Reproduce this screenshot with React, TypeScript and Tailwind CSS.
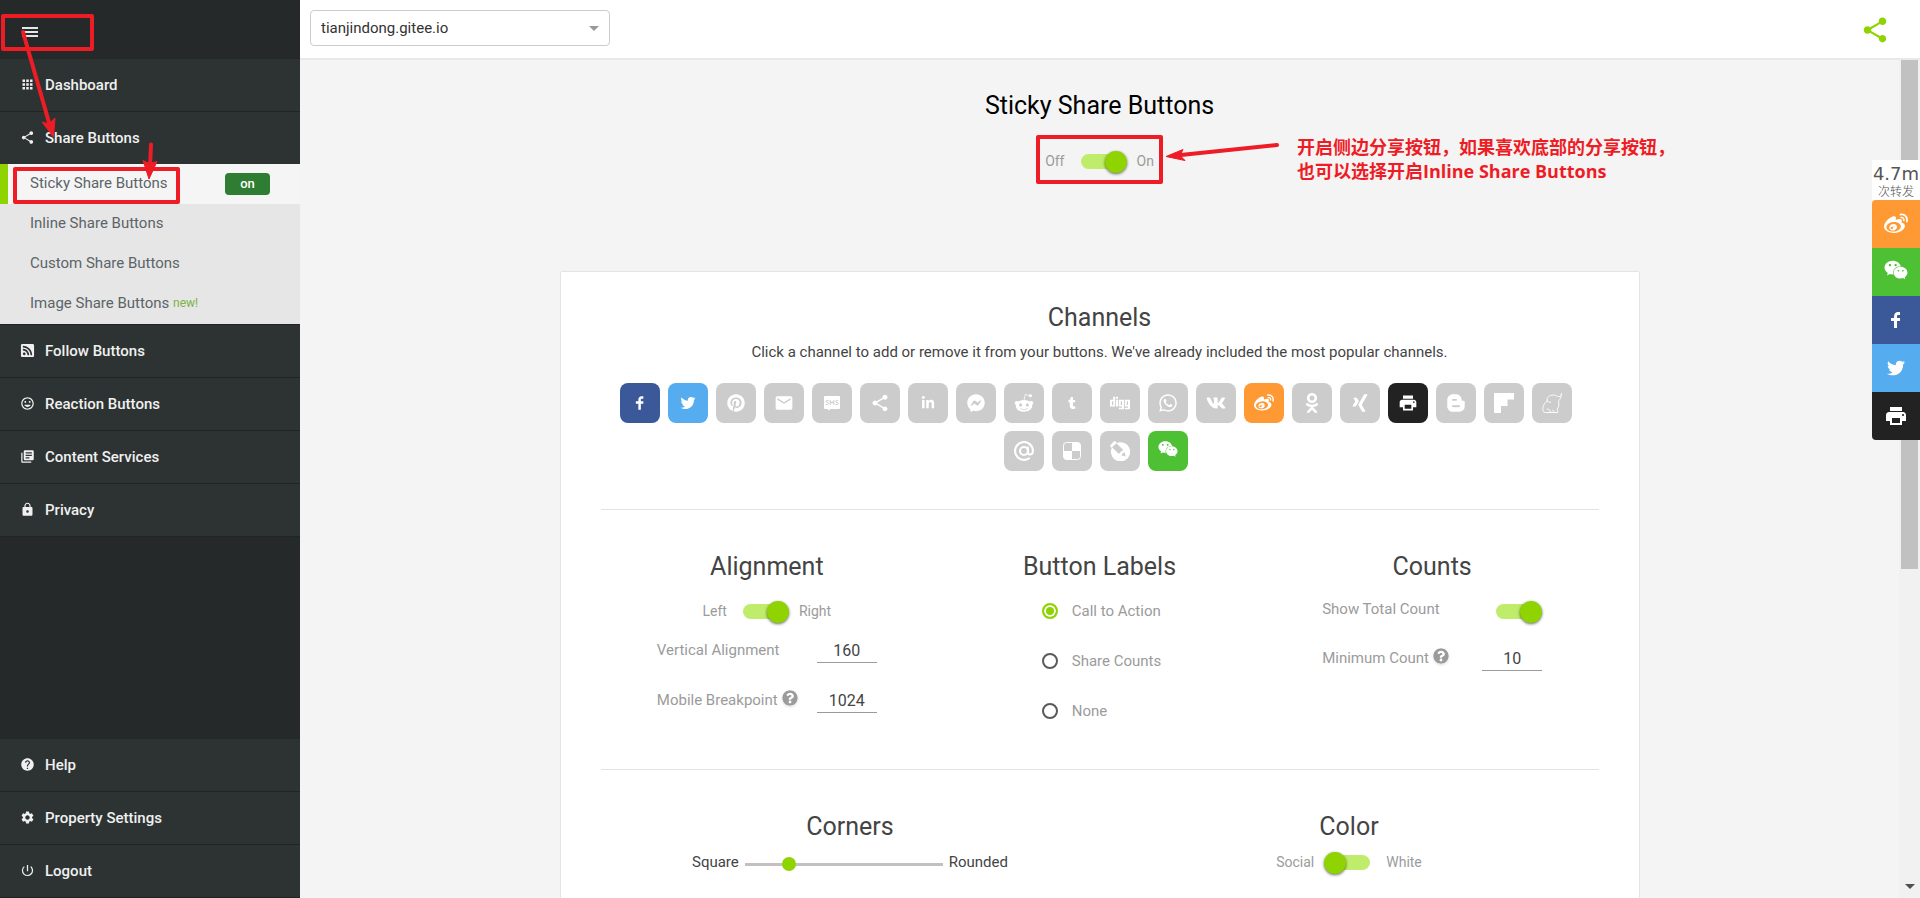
import React, { useId } from "react";
import type { ComponentType, ReactNode } from "react";
import {
  MdApps,
  MdArrowDropDown,
  MdEmail,
  MdHelp,
  MdInsertEmoticon,
  MdLibraryBooks,
  MdLock,
  MdPowerSettingsNew,
  MdPrint,
  MdSettings,
  MdShare,
} from "react-icons/md";
import {
  FaBloggerB,
  FaDigg,
  FaFacebookMessenger,
  FaLinkedinIn,
  FaOdnoklassniki,
  FaPinterest,
  FaQuestionCircle,
  FaRedditAlien,
  FaRssSquare,
  FaTumblr,
  FaVk,
  FaWeibo,
  FaWeixin,
  FaWhatsapp,
  FaXing,
} from "react-icons/fa";

type IconType = ComponentType<{ className?: string }>;

/* ---------- custom icons ---------- */

const Facebook: IconType = ({ className }) => (
  <svg viewBox="0 0 40 40" fill="currentColor" className={className}>
    <path d="m21.7 16.7h5v5h-5v11.6h-5v-11.6h-5v-5h5v-2.1c0-2 0.6-4.5 1.8-5.9 1.3-1.3 2.8-2 4.7-2h3.5v5h-3.5c-0.9 0-1.5 0.6-1.5 1.5v3.5z" />
  </svg>
);

const Twitter: IconType = ({ className }) => (
  <svg viewBox="0 0 40 40" fill="currentColor" className={className}>
    <path d="m31.5 11.7c1.3-0.8 2.2-2 2.7-3.4-1.4 0.7-2.7 1.2-4 1.4-1.1-1.2-2.6-1.9-4.4-1.9-1.7 0-3.2 0.6-4.4 1.8-1.2 1.2-1.8 2.7-1.8 4.4 0 0.5 0.1 0.9 0.2 1.3-5.1-0.1-9.4-2.3-12.7-6.4-0.6 1-0.9 2.1-0.9 3.1 0 2.2 1 3.9 2.8 5.2-1.1-0.1-2-0.4-2.8-0.8 0 1.5 0.5 2.8 1.4 4 0.9 1.1 2.1 1.8 3.5 2.1-0.5 0.1-1 0.2-1.6 0.2-0.5 0-0.9 0-1.1-0.1 0.4 1.2 1.1 2.3 2.1 3 1.1 0.8 2.3 1.2 3.6 1.3-2.2 1.7-4.7 2.6-7.6 2.6-0.7 0-1.2 0-1.5-0.1 2.8 1.9 6 2.8 9.5 2.8 3.5 0 6.7-0.9 9.4-2.7 2.8-1.8 4.8-4.1 6.1-6.7 1.3-2.6 1.9-5.3 1.9-8.1v-0.8c1.3-0.9 2.3-2 3.1-3.2-1.1 0.5-2.3 0.8-3.5 1z" />
  </svg>
);

const Sms: IconType = ({ className }) => (
  <svg viewBox="0 0 20 20" className={className}>
    <path d="M3 3h14a1 1 0 0 1 1 1v11a1 1 0 0 1-1 1H8.500L7 17.500 5.500 16H3a1 1 0 0 1-1-1V4a1 1 0 0 1 1-1z" fill="currentColor" />
    <path
      d="M6.600 7.700C6 7.200 4 7.200 4 8.300s2.600.900 2.600 2.100S4.400 11.800 3.700 11.100M8.200 11.800V7.500L10 10.300l1.800-2.800v4.300M16.200 7.700c-.6-.5-2.600-.5-2.600.6s2.600.9 2.600 2.100-2.200 1.400-2.900.7"
      fill="none"
      stroke="#cccccc"
      strokeWidth="1"
    />
  </svg>
);

const Flipboard: IconType = ({ className }) => (
  <svg viewBox="0 0 20 20" fill="currentColor" className={className}>
    <path d="M0 0h20v6.500h-6.500V13H7v7H0z" />
  </svg>
);

const Elephant: IconType = ({ className }) => (
  <svg viewBox="0 0 20 20" fill="none" stroke="currentColor" strokeWidth="0.9" strokeLinecap="round" className={className}>
    <path d="M19.500.5C19.500 2.500 18.300 3.600 16.800 3.600 15 3.600 14.200 2 11.500 2 7.500 2 5 4.200 5 7c0 2 2 2.500 3.600 2.200M5.200 7.800C2.500 10 .8 12.800.8 16c0 2.600.7 3.500 3 3.500h4.400c.4-2-1-3.500-3-3.500M8.200 19.500h3.300c1-1 .2-2.200-.8-2.400M11.500 19.500h4.300c.9-1.500-1-1.800-.6-3.300 1.600-2.400 2.200-4.700 1.300-7.200-.4-1.700 2.700-2.400 2.900-7.400" />
  </svg>
);

const MailRu: IconType = ({ className }) => (
  <svg viewBox="0 0 20 20" fill="none" stroke="currentColor" strokeWidth="2.1" strokeLinecap="round" className={className}>
    <circle cx="10" cy="10" r="4" />
    <path d="M14 10v1.300c0 3.200 4.900 3.200 4.900-1.300a8.900 8.900 0 1 0-3.900 7.300M14 6.500V11" />
  </svg>
);

const Delicious: IconType = ({ className }) => (
  <svg viewBox="0 0 20 20" className={className}>
    <rect x="1.500" y="1.500" width="17" height="17" rx="3" fill="none" stroke="currentColor" strokeWidth="1" />
    <path d="M10 1.500h5.500a3 3 0 0 1 3 3V10H10zM1.500 10H10v8.500H4.500a3 3 0 0 1-3-3z" fill="currentColor" />
  </svg>
);

const LiveJournal: IconType = ({ className }) => (
  <svg viewBox="0 0 20 20" className={className}>
    <path d="M3 1.200 4.200.3c.5-.3.800-.3 1.200.1L6.900 1.900A9.600 9.600 0 1 1 1.700 7L.4 5.500c-.4-.4-.4-.8 0-1.300z" fill="currentColor" />
    <path d="M6.500 2.200 13.300 9c-1.700 1-3.300 2.300-4.300 4.100L2 6.300M11.300 14.300c.8-1.400 1.800-2.400 3.300-3l1 4.300z" fill="#cccccc" />
  </svg>
);

/* ---------- navigation ---------- */

const navMiddle: { label: string; icon: IconType }[] = [
  { label: "Follow Buttons", icon: FaRssSquare },
  { label: "Reaction Buttons", icon: MdInsertEmoticon },
  { label: "Content Services", icon: MdLibraryBooks },
  { label: "Privacy", icon: MdLock },
];

const navBottom: { label: string; icon: IconType }[] = [
  { label: "Help", icon: MdHelp },
  { label: "Property Settings", icon: MdSettings },
  { label: "Logout", icon: MdPowerSettingsNew },
];

function NavItem({ label, icon: Icon }: { label: string; icon: IconType }) {
  return (
    <a href="#" className="flex h-[53px] items-center border-b border-[#212425] bg-[#2d3333] pl-5 text-[15px] font-medium text-[#f0f0f0]">
      <span className="flex w-[25px] items-center pb-0.5">
        <Icon className="size-[15px]" />
      </span>
      {label}
    </a>
  );
}

function SubItem({ children }: { children: ReactNode }) {
  return (
    <a href="#" className="flex h-10 items-center pb-0.5 pl-[30px] text-[15px] text-[#5c6468]">
      {children}
    </a>
  );
}

function Sidebar() {
  return (
    <nav className="relative flex w-[300px] shrink-0 flex-col bg-[#26292a]">
      <button aria-label="Menu" className="flex h-[59px] w-full shrink-0 items-center pt-[6px] pl-5 text-[#e6e6e6]">
        <svg viewBox="0 0 20 20" className="size-5" fill="none" stroke="currentColor" strokeWidth="2">
          <path d="M2 5h16M2 9h16M2 13h16" />
        </svg>
      </button>
      <NavItem label="Dashboard" icon={MdApps} />
      <NavItem label="Share Buttons" icon={MdShare} />
      <div className="-mt-px border-b border-[#212425] bg-[#e6e6e6]">
        <a href="#" className="flex h-10 items-center border-l-8 border-[#8fd300] bg-[#f5f5f5] pl-[22px] text-[15px] text-[#5c6468]">
          <span className="flex-1 pb-0.5">Sticky Share Buttons</span>
          <span className="mr-[30px] flex h-[22px] w-[45px] items-center justify-center rounded-sm bg-[#2e7d32] text-[13px] font-medium text-white">
            on
          </span>
        </a>
        <SubItem>Inline Share Buttons</SubItem>
        <SubItem>Custom Share Buttons</SubItem>
        <SubItem>
          Image Share Buttons&nbsp;<span className="text-xs text-[#7cb342]">new!</span>
        </SubItem>
      </div>
      {navMiddle.map((n) => (
        <NavItem key={n.label} {...n} />
      ))}
      <div className="flex-1" />
      {navBottom.map((n) => (
        <NavItem key={n.label} {...n} />
      ))}

      {/* callout marks */}
      <div className="pointer-events-none absolute top-[14px] left-px h-[37px] w-[93px] rounded-xs border-4 border-[#ee1c25]" />
      <div className="pointer-events-none absolute top-[167px] left-[13px] h-[37px] w-[167px] rounded-xs border-4 border-[#ee1c25]" />
      <svg viewBox="0 0 200 200" className="pointer-events-none absolute top-0 left-0 size-[200px]" fill="#ee1c25" stroke="#ee1c25">
        <path d="M23 32 50 126" strokeWidth="4" strokeLinecap="round" />
        <path d="M53.500 137 42 122l7 2 6-6z" strokeWidth="1" />
        <path d="M151 144.500 150 168" strokeWidth="4" strokeLinecap="round" />
        <path d="M149 179 143 160.500l6.500 3 7.500-2z" strokeWidth="1" />
      </svg>
    </nav>
  );
}

/* ---------- form controls ---------- */

function Switch({ label, defaultChecked = false, id }: { label?: string; defaultChecked?: boolean; id?: string }) {
  return (
    <input
      id={id}
      type="checkbox"
      role="switch"
      aria-label={label}
      defaultChecked={defaultChecked}
      className="relative h-[15px] w-10 shrink-0 appearance-none rounded-full bg-[#c0ec6c] before:absolute before:-top-[3px] before:-left-1.5 before:size-[22px] before:rounded-full before:bg-[#8fd300] before:shadow-[0_1px_3px_rgba(0,0,0,0.6)] checked:before:left-6"
    />
  );
}

function SwitchRow({ left, right, label, on = false }: { left: string; right: string; label: string; on?: boolean }) {
  return (
    <div className="flex h-[22px] items-center justify-center gap-4 text-sm text-[#9b9b9b]">
      <span>{left}</span>
      <Switch label={label} defaultChecked={on} />
      <span>{right}</span>
    </div>
  );
}

function NumberField({ label, value, help = false }: { label: string; value: string; help?: boolean }) {
  const id = useId();
  return (
    <div className="flex h-[25px] w-[220px] items-center">
      <label htmlFor={id} className="text-[15px] text-[#9b9b9b]">
        {label}
      </label>
      {help && <FaQuestionCircle className="mb-1.5 ml-1 size-4 rounded-full text-[#9b9b9b] shadow-sm" />}
      <input
        id={id}
        type="text"
        inputMode="numeric"
        defaultValue={value}
        className="ml-auto h-[25px] w-[60px] border-b border-[#9b9b9b] bg-transparent text-center text-base text-[#444444] outline-none"
      />
    </div>
  );
}

function RadioRow({ label, checked = false }: { label: string; checked?: boolean }) {
  return (
    <label className="flex h-[22px] items-center gap-[14px] text-[15px] text-[#9b9b9b]">
      <input
        type="radio"
        name="button-labels"
        defaultChecked={checked}
        className="size-4 appearance-none rounded-full border-2 border-[#5a5a5a] checked:border-[#8fd300] checked:bg-[#8fd300] checked:shadow-[inset_0_0_0_2px_#ffffff]"
      />
      {label}
    </label>
  );
}

function Heading({ children }: { children: ReactNode }) {
  return <h2 className="text-center text-[25px] leading-8 text-[#444444]">{children}</h2>;
}

/* ---------- channels ---------- */

const channels: { name: string; icon: IconType; size: string; bg: string }[] = [
  { name: "Facebook", icon: Facebook, size: "size-5", bg: "bg-[#3b5998]" },
  { name: "Twitter", icon: Twitter, size: "size-5", bg: "bg-[#55acee]" },
  { name: "Pinterest", icon: FaPinterest, size: "size-[18px]", bg: "bg-[#cccccc]" },
  { name: "Email", icon: MdEmail, size: "size-5", bg: "bg-[#cccccc]" },
  { name: "SMS", icon: Sms, size: "size-5", bg: "bg-[#cccccc]" },
  { name: "ShareThis", icon: MdShare, size: "size-5", bg: "bg-[#cccccc]" },
  { name: "LinkedIn", icon: FaLinkedinIn, size: "size-[14px]", bg: "bg-[#cccccc]" },
  { name: "Messenger", icon: FaFacebookMessenger, size: "size-[18px]", bg: "bg-[#cccccc]" },
  { name: "Reddit", icon: FaRedditAlien, size: "size-5", bg: "bg-[#cccccc]" },
  { name: "Tumblr", icon: FaTumblr, size: "size-3", bg: "bg-[#cccccc]" },
  { name: "Digg", icon: FaDigg, size: "size-5", bg: "bg-[#cccccc]" },
  { name: "WhatsApp", icon: FaWhatsapp, size: "size-5", bg: "bg-[#cccccc]" },
  { name: "VK", icon: FaVk, size: "size-5", bg: "bg-[#cccccc]" },
  { name: "Weibo", icon: FaWeibo, size: "size-5", bg: "bg-[#ff9933]" },
  { name: "Odnoklassniki", icon: FaOdnoklassniki, size: "size-5", bg: "bg-[#cccccc]" },
  { name: "Xing", icon: FaXing, size: "size-5", bg: "bg-[#cccccc]" },
  { name: "Print", icon: MdPrint, size: "size-5", bg: "bg-[#222222]" },
  { name: "Blogger", icon: FaBloggerB, size: "size-5", bg: "bg-[#cccccc]" },
  { name: "Flipboard", icon: Flipboard, size: "size-5", bg: "bg-[#cccccc]" },
  { name: "Meneame", icon: Elephant, size: "size-5", bg: "bg-[#cccccc]" },
  { name: "Mail.ru", icon: MailRu, size: "size-5", bg: "bg-[#cccccc]" },
  { name: "Delicious", icon: Delicious, size: "size-5", bg: "bg-[#cccccc]" },
  { name: "LiveJournal", icon: LiveJournal, size: "size-5", bg: "bg-[#cccccc]" },
  { name: "WeChat", icon: FaWeixin, size: "mb-1 size-5", bg: "bg-[#4ec034]" },
];

const dockItems: { name: string; icon: IconType; size: string; bg: string }[] = [
  { name: "Weibo", icon: FaWeibo, size: "size-6", bg: "bg-[#ff9933] rounded-tl-sm" },
  { name: "WeChat", icon: FaWeixin, size: "mb-1 size-6", bg: "bg-[#4ec034]" },
  { name: "Facebook", icon: Facebook, size: "size-6", bg: "bg-[#3b5998]" },
  { name: "Twitter", icon: Twitter, size: "size-6", bg: "bg-[#55acee]" },
  { name: "Print", icon: MdPrint, size: "size-6", bg: "bg-[#222222] rounded-bl-sm" },
];

function ShareDock() {
  return (
    <aside className="absolute top-40 right-0 w-12">
      <div className="flex h-10 flex-col items-center overflow-hidden bg-white pt-1 text-[#555555]">
        <span className="font-['DejaVu_Sans',sans-serif] text-[18px] leading-5">4.7m</span>
        <span className="font-['Noto_Sans_CJK_SC',sans-serif] text-xs leading-[14px] font-light">次转发</span>
      </div>
      {dockItems.map(({ name, icon: Icon, size, bg }) => (
        <button key={name} aria-label={name} className={`flex size-12 items-center justify-center text-white ${bg}`}>
          <Icon className={size} />
        </button>
      ))}
    </aside>
  );
}

export default function App() {
  return (
    <div className="relative flex h-screen overflow-hidden bg-[#f4f4f4] font-[Roboto,'Noto_Sans_CJK_SC',sans-serif]">
      <Sidebar />
      <div className="flex min-w-0 flex-1 flex-col">
        <header className="flex h-[60px] shrink-0 items-start justify-between border-b-2 border-[#e9e9e9] bg-white pt-[10px] pr-[30px] pl-[10px]">
          <div className="relative">
            <select
              aria-label="Property"
              className="h-9 w-[300px] appearance-none rounded border border-[#cccccc] bg-white pl-[10px] text-[15px] text-[#333333]"
            >
              <option>tianjindong.gitee.io</option>
            </select>
            <MdArrowDropDown className="pointer-events-none absolute top-1.5 right-1 size-6 text-[#999999]" />
          </div>
          <a href="#" aria-label="ShareThis" className="pt-[5px]">
            <MdShare className="size-[30px] text-[#8fd300]" />
          </a>
        </header>

        <div className="flex min-h-0 flex-1">
          <main className="min-w-0 flex-1 overflow-hidden">
            <h1 className="pt-[31px] text-center text-[25px] leading-[30px] text-black">Sticky Share Buttons</h1>
            <div className="relative mx-auto mt-[29px] w-[127px]">
              <SwitchRow left="Off" right="On" label="Sticky share buttons" on />
              <div className="pointer-events-none absolute -top-[15px] left-0 h-[49px] w-[127px] rounded-xs border-4 border-[#ee1c25]" />
              <svg viewBox="0 0 120 24" className="pointer-events-none absolute -top-[10px] left-[128px] h-6 w-[120px]" fill="#ee1c25" stroke="#ee1c25">
                <path d="M12 15.500 113 5" strokeWidth="4" strokeLinecap="round" />
                <path d="M2 16.500 19 9.500l-3 6 5 5z" strokeWidth="1" />
              </svg>
              <p className="pointer-events-none absolute -top-[15px] left-[261px] font-['Open_Sans','Noto_Sans_CJK_SC',sans-serif] text-[18px] leading-6 font-bold whitespace-nowrap text-[#ee1c25]">
                开启侧边分享按钮，如果喜欢底部的分享按钮，
                <br />
                也可以选择开启Inline Share Buttons
              </p>
            </div>

            <section className="mx-auto mt-[99px] max-w-[1080px] rounded-xs border border-[#e4e4e4] bg-white px-10 pt-[30px] pb-10">
              <Heading>Channels</Heading>
              <p className="mt-2 text-center text-[15px] leading-5 text-[#444444]">
                Click a channel to add or remove it from your buttons. We've already included the most popular channels.
              </p>
              <div className="mt-[21px] flex flex-wrap justify-center">
                {channels.map(({ name, icon: Icon, size, bg }) => (
                  <button key={name} aria-label={name} className={`mr-2 mb-2 flex size-10 items-center justify-center rounded-lg text-white ${bg}`}>
                    <Icon className={size} />
                  </button>
                ))}
              </div>

              <hr className="mt-[30px] border-[#e4e4e4]" />

              <div className="mt-[41px] grid grid-cols-3">
                <div className="flex flex-col items-center">
                  <Heading>Alignment</Heading>
                  <div className="mt-[17px]">
                    <SwitchRow left="Left" right="Right" label="Alignment" on />
                  </div>
                  <div className="mt-4 flex flex-col gap-[25px]">
                    <NumberField label="Vertical Alignment" value="160" />
                    <NumberField label="Mobile Breakpoint" value="1024" help />
                  </div>
                </div>
                <div className="flex flex-col items-center">
                  <Heading>Button Labels</Heading>
                  <div className="mt-[17px] flex flex-col gap-7 pl-1">
                    <RadioRow label="Call to Action" checked />
                    <RadioRow label="Share Counts" />
                    <RadioRow label="None" />
                  </div>
                </div>
                <div className="flex flex-col items-center">
                  <Heading>Counts</Heading>
                  <div className="mt-[17px] flex flex-col gap-6">
                    <div className="flex h-[22px] items-center justify-between pr-1.5">
                      <label htmlFor="show-total" className="pb-1 text-[15px] text-[#9b9b9b]">
                        Show Total Count
                      </label>
                      <Switch id="show-total" defaultChecked />
                    </div>
                    <NumberField label="Minimum Count" value="10" help />
                  </div>
                </div>
              </div>

              <hr className="mt-[47px] border-[#e4e4e4]" />

              <div className="mt-[41px] grid grid-cols-2">
                <div>
                  <Heading>Corners</Heading>
                  <div className="mt-2 flex h-[22px] items-center justify-center gap-1.5 text-[15px] text-[#444444]">
                    <span>Square</span>
                    <input
                      type="range"
                      aria-label="Corners"
                      defaultValue={20}
                      className="mt-1 h-[3px] w-[198px] appearance-none bg-[#c4c0c2] [&::-webkit-slider-thumb]:size-[14px] [&::-webkit-slider-thumb]:appearance-none [&::-webkit-slider-thumb]:rounded-full [&::-webkit-slider-thumb]:bg-[#8fd300]"
                    />
                    <span>Rounded</span>
                  </div>
                </div>
                <div>
                  <Heading>Color</Heading>
                  <div className="mt-2">
                    <SwitchRow left="Social" right="White" label="Color" />
                  </div>
                </div>
              </div>
            </section>
          </main>

          <div aria-hidden="true" className="flex w-[21px] shrink-0 flex-col items-center justify-between bg-[#f1f1f1]">
            <div className="h-[509px] w-[17px] bg-[#c1c1c1]" />
            <MdArrowDropDown className="size-6 text-[#505050]" />
          </div>
        </div>
      </div>
      <ShareDock />
    </div>
  );
}
